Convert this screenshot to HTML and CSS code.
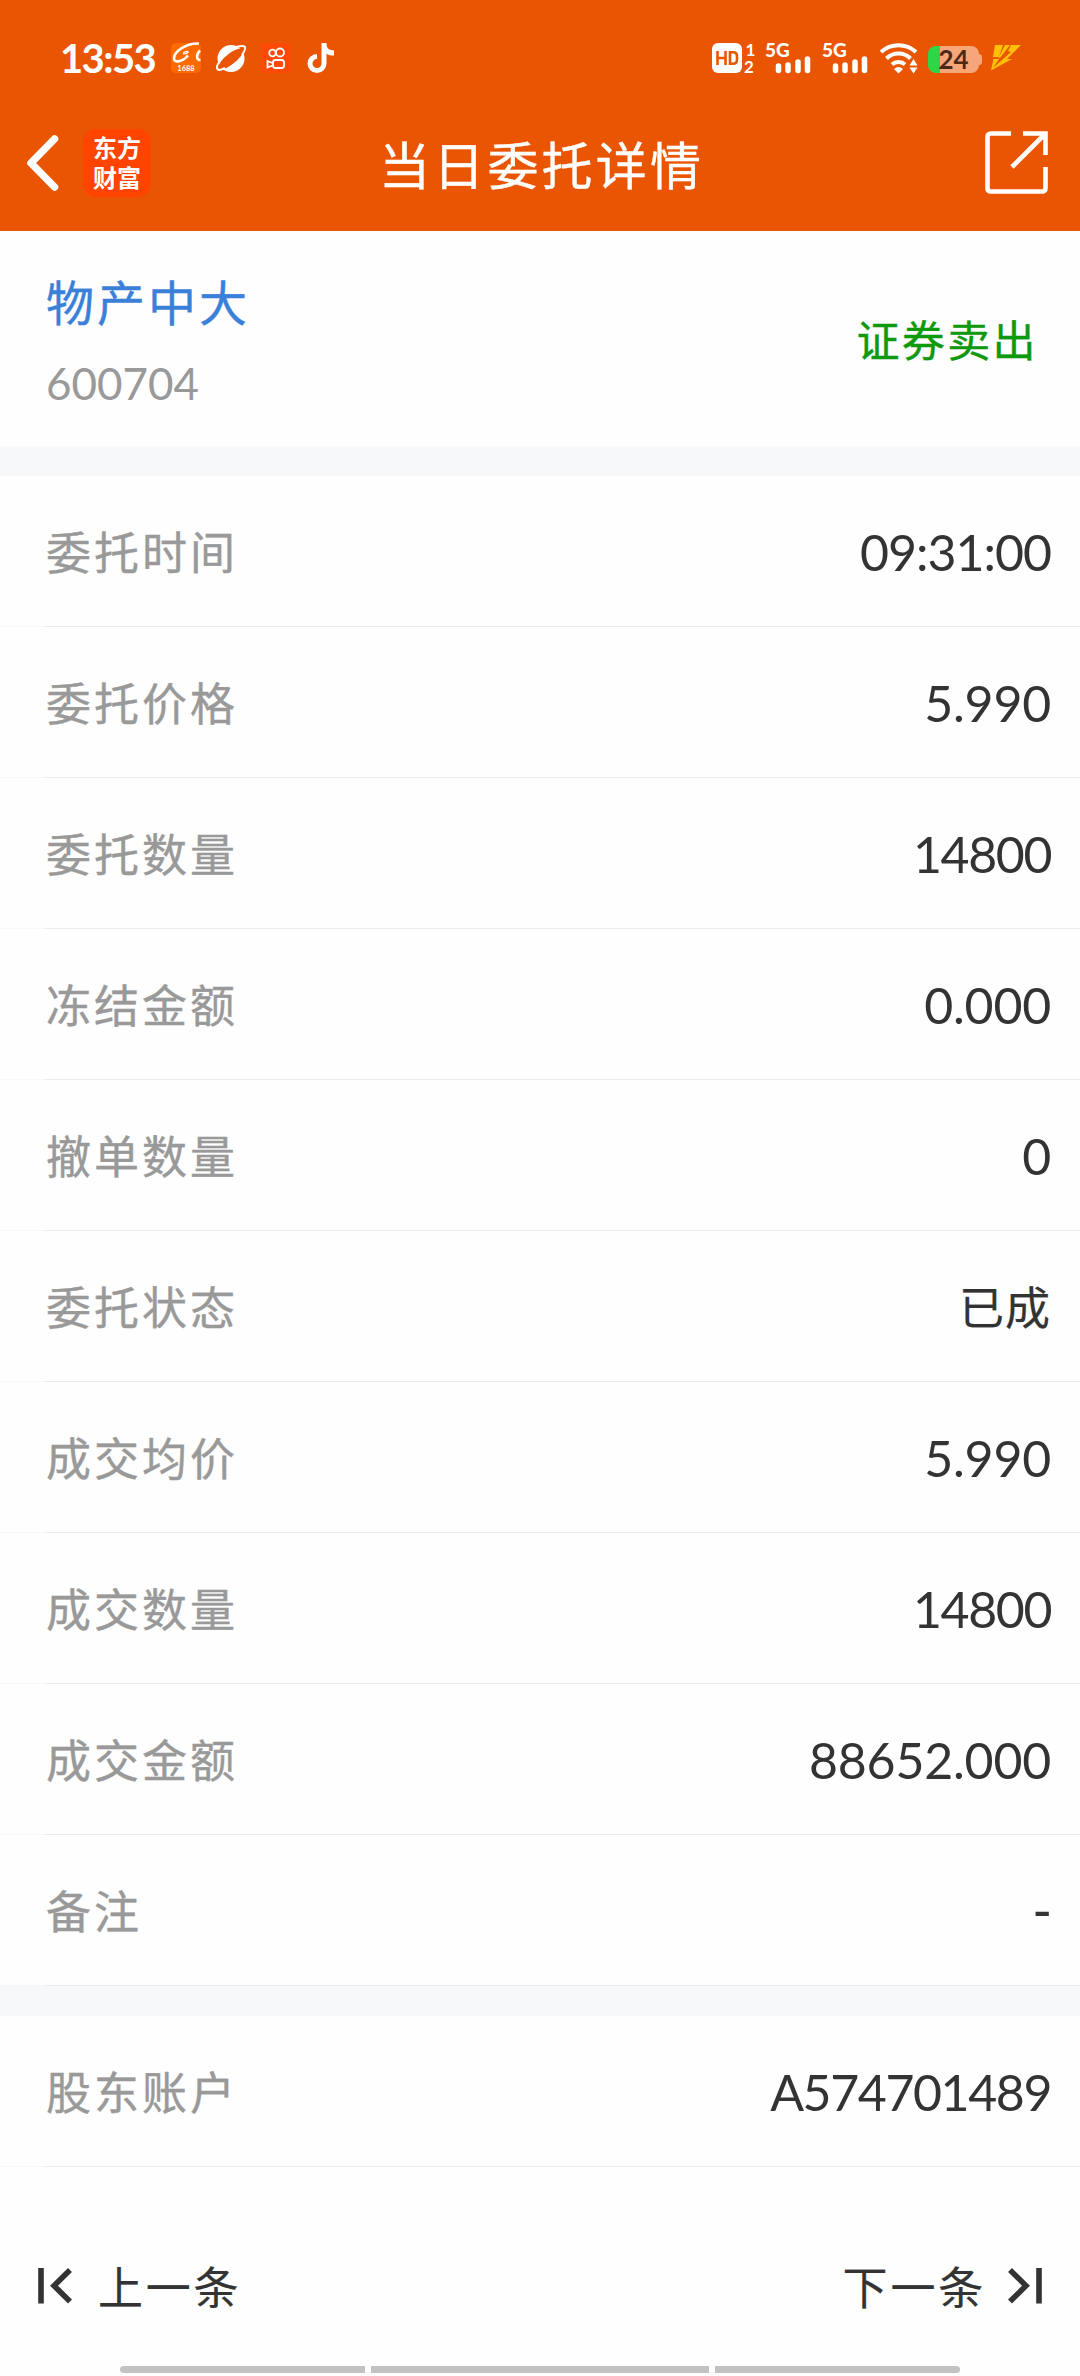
FILE: index.html
```html
<!DOCTYPE html>
<html lang="zh-CN">
<head>
    <meta charset="UTF-8">
    <meta name="viewport" content="width=device-width, initial-scale=1.0">
    <title>当日委托详情</title>
    <link rel="stylesheet" href="styles.css">
</head>
<body>
    <div class="status-bar">
        <span class="time">13:53</span>
        <div class="app-icons">
            <svg width="30" height="30" viewBox="0 0 30 30">
                <rect width="30" height="30" rx="5" fill="#ff6a00"/>
                <path d="M28 .5C14 0 3 9 3 15.500c0 5 9 3 14-3" fill="none" stroke="#fff" stroke-width="2.600"/>
                <path d="M12 10c3-2 6-2 5-.5-1 1-3 1.500-5 1.500" fill="none" stroke="#fff" stroke-width="1.200"/>
                <path d="M29 7.500c-4 4-4 10 .5 9.500" fill="none" stroke="#fff" stroke-width="2.600"/>
                <text x="15" y="27.500" text-anchor="middle" class="icon-1688">1688</text>
            </svg>
            <svg width="30" height="30" viewBox="0 0 30 30">
                <circle cx="15" cy="15.500" r="13.500" fill="#fff"/>
                <path d="M3 26C-2 21 20 2 27 6c5 4-18 24-24 20z" fill="#ea5504"/>
                <path d="M4 18c-4 5-4 8-1 9 2 0 4-1 6-2M20 4c4-1 8-2 9 0s-1 5-3 8" fill="none" stroke="#fff" stroke-width="2"/>
            </svg>
            <svg width="30" height="30" viewBox="0 0 30 30">
                <rect width="30" height="30" rx="5" fill="#ff4906"/>
                <g fill="none" stroke="#fff" stroke-width="1.800">
                    <circle cx="11.500" cy="10" r="3.300"/>
                    <circle cx="19" cy="9.500" r="4"/>
                    <rect x="12" y="17" width="11" height="8" rx="2.500"/>
                    <path d="M11.500 20l-5-2v6.500l5-2"/>
                </g>
            </svg>
            <svg width="30" height="30" viewBox="0 0 30 30">
                <path d="M18 0v20.500a7 7 0 1 1-7-7M18 1c0 6 4 9 10 9" fill="none" stroke="#fff" stroke-width="5"/>
            </svg>
        </div>
        <div class="system-icons">
            <svg width="44" height="32" viewBox="0 0 44 32">
                <rect y="1" width="30" height="30" rx="6" fill="#fff"/>
                <path d="M5.500 9v14M13.500 9v14M5.500 16h8M18 10.200h3q4 0 4 4v3.600q0 4-4 4h-3z" fill="none" stroke="#ea5504" stroke-width="2.600"/>
                <text x="33.500" y="13.500" class="sim">1</text>
                <text x="32" y="31" class="sim">2</text>
            </svg>
            <svg class="signal" width="48" height="32" viewBox="0 0 48 32">
                <text x="0" y="15" class="net">5G</text>
                <path d="M13.500 24v4.500M23 23v5.500M33 20v8.500M42.500 17v11.500" stroke="#fff" stroke-width="5.500" stroke-linecap="round"/>
            </svg>
            <svg class="signal" width="48" height="32" viewBox="0 0 48 32">
                <text x="0" y="15" class="net">5G</text>
                <path d="M13.500 24v4.500M23 23v5.500M33 20v8.500M42.500 17v11.500" stroke="#fff" stroke-width="5.500" stroke-linecap="round"/>
            </svg>
            <svg class="wifi" width="40" height="32" viewBox="0 0 40 32">
                <g fill="none" stroke="#fff" stroke-width="4">
                    <path d="M2 10a26 26 0 0 1 35 0"/>
                    <path d="M7.500 16.500a17 17 0 0 1 24 0"/>
                    <path d="M13 22.500a9.500 9.500 0 0 1 13 0"/>
                </g>
                <path d="M15 27q4.500-4 9 0l-4.500 4.500z" fill="#fff"/>
                <path d="M30.500 23.500l4-6.500 4 6.500zM30.500 25.500h8l-4 6z" fill="#fff"/>
            </svg>
            <div class="battery"><span>24</span></div>
            <svg class="bolt" width="32" height="26" viewBox="0 0 32 26">
                <path d="M5 0h8L9 12H3zM15 0h5L10 13H8.500zM21 0h10L17 14h5L1 25.500 3.500 14H9L3 23 21 7l-3-1z" fill="#ffc107"/>
            </svg>
        </div>
    </div>

    <div class="header">
        <svg class="back" width="34" height="56" viewBox="0 0 34 56">
            <path d="M28.500 4L5 28l23.500 24" fill="none" stroke="#fff" stroke-width="7.500" stroke-linecap="round" stroke-linejoin="round"/>
        </svg>
        <div class="logo"><span>东方</span><span>财富</span></div>
        <h1>当日委托详情</h1>
        <svg class="share" width="64" height="64" viewBox="0 0 64 64">
            <path d="M26 2.500H6Q2.500 2.500 2.500 6v51q0 3.500 3.500 3.500h51q3.500 0 3.500-3.500V36M38 2.500h22.500V24M60 3L27 36" fill="none" stroke="#fff" stroke-width="4.600"/>
        </svg>
    </div>

    <div class="stock">
        <div>
            <div class="stock-name">物产中大</div>
            <div class="stock-code">600704</div>
        </div>
        <div class="direction">证券卖出</div>
    </div>

    <div class="list">
        <div class="row"><span class="label">委托时间</span><span class="value time-value">09:31:00</span></div>
        <div class="row"><span class="label">委托价格</span><span class="value">5.990</span></div>
        <div class="row"><span class="label">委托数量</span><span class="value tight">14800</span></div>
        <div class="row"><span class="label">冻结金额</span><span class="value">0.000</span></div>
        <div class="row"><span class="label">撤单数量</span><span class="value">0</span></div>
        <div class="row"><span class="label">委托状态</span><span class="value text-value">已成</span></div>
        <div class="row"><span class="label">成交均价</span><span class="value">5.990</span></div>
        <div class="row"><span class="label">成交数量</span><span class="value tight">14800</span></div>
        <div class="row"><span class="label">成交金额</span><span class="value">88652.000</span></div>
        <div class="row"><span class="label">备注</span><span class="value empty">-</span></div>
    </div>

    <div class="list">
        <div class="row"><span class="label">股东账户</span><span class="value tight">A574701489</span></div>
    </div>

    <div class="pager">
        <div class="pager-btn">
            <svg width="36" height="36" viewBox="0 0 36 36">
                <path d="M3 0v35.500M32 2L16 17.700 32 33.500" fill="none" stroke="#333" stroke-width="5.600"/>
            </svg>
            <span>上一条</span>
        </div>
        <div class="pager-btn next">
            <span>下一条</span>
            <svg width="36" height="36" viewBox="0 0 36 36">
                <path d="M33 0v35.500M4 2l16 15.700L4 33.500" fill="none" stroke="#333" stroke-width="5.600"/>
            </svg>
        </div>
    </div>

    <div class="gesture-bar">
        <i></i><i class="middle"></i><i></i>
    </div>
</body>
</html>
```
FILE: styles.css
```css
* {
    box-sizing: border-box;
}
body {
    margin: 0;
    width: 1080px;
    height: 2376px;
    overflow: hidden;
    background-color: #fefefe;
    color: #333;
    font-family: Lato, "Noto Sans CJK SC", sans-serif;
}
svg {
    display: block;
    flex: none;
    overflow: visible;
}
.status-bar {
    display: flex;
    align-items: center;
    height: 95px;
    padding: 21px 58px 0 60px;
    background-color: #ea5504;
    color: #fff;
}
.time {
    width: 111px;
    font-size: 40px;
    font-weight: bold;
    letter-spacing: -1.6px;
    white-space: nowrap;
}
.app-icons {
    display: flex;
    gap: 15px;
}
.icon-1688 {
    fill: #fff;
    font-size: 7.500px;
    font-weight: bold;
}
.system-icons {
    display: flex;
    align-items: center;
    margin-left: auto;
}
.sim {
    fill: #fff;
    font-size: 17px;
    font-weight: bold;
}
.net {
    fill: #fff;
    font-size: 19px;
    font-weight: 900;
}
.signal {
    margin-left: 9px;
}
.wifi {
    margin-left: 9px;
}
.battery {
    display: flex;
    align-items: center;
    justify-content: center;
    position: relative;
    width: 51px;
    height: 27px;
    margin: 2px 4px 0 9px;
    border-radius: 8px;
    background: linear-gradient(to right, #2ed647 12px, #f7a67c 12px);
    color: #4b2a1c;
    font-size: 26px;
    font-weight: bold;
    line-height: 27px;
}
.battery::after {
    content: "";
    position: absolute;
    right: -3px;
    top: 8px;
    width: 3px;
    height: 11px;
    border-radius: 0 3px 3px 0;
    background-color: #f7a67c;
}
.bolt {
    margin-left: 7px;
}

.header {
    display: flex;
    align-items: center;
    height: 136px;
    padding: 0 31px 0 26px;
    background-color: #ea5504;
    color: #fff;
}
.logo {
    display: flex;
    flex-direction: column;
    justify-content: center;
    width: 68px;
    height: 68px;
    margin-left: 23px;
    padding-bottom: 2px;
    border-radius: 14px;
    background-color: #ff4400;
    font-family: "Noto Sans CJK SC", sans-serif;
    font-size: 24px;
    font-weight: bold;
    line-height: 30px;
    text-align: center;
}
.header h1 {
    flex: 1;
    margin: 5px 0 0;
    padding-left: 228px;
    font-size: 51px;
    font-weight: normal;
    line-height: 74px;
    letter-spacing: 3.2px;
    -webkit-text-stroke: 0.4px;
}

.stock {
    display: flex;
    justify-content: space-between;
    align-items: center;
    height: 215px;
    padding: 5px 42px 0 46px;
}
.stock-name {
    color: #3a80d8;
    font-size: 48px;
    line-height: 72px;
    letter-spacing: 3px;
    -webkit-text-stroke: 0.4px;
}
.stock-code {
    margin-top: 11px;
    color: #999;
    font-size: 44px;
    line-height: 66px;
}
.direction {
    margin-top: -6px;
    color: #0f990f;
    font-size: 43px;
    letter-spacing: 2.4px;
    -webkit-text-stroke: 0.4px;
}

.list {
    border-top: 30px solid #f6f8fa;
}
.row {
    display: flex;
    justify-content: space-between;
    align-items: center;
    height: 151px;
    padding: 0 29px 0 46px;
    background: linear-gradient(to right, #f8f8f8 45px, #ececec 45px) bottom / 100% 1px no-repeat;
}
.label {
    margin-top: -3px;
    color: #999;
    font-size: 45px;
    letter-spacing: 3px;
    -webkit-text-stroke: 0.4px;
}
.value {
    font-size: 50px;
    letter-spacing: -0.2px;
}
.text-value {
    margin-top: -3px;
    font-size: 45px;
    letter-spacing: 1px;
    -webkit-text-stroke: 0.2px;
}
.time-value {
    letter-spacing: -1px;
}
.tight {
    letter-spacing: -1.4px;
}
.empty {
    margin-top: -10px;
    font-family: "Noto Sans CJK SC", sans-serif;
    font-weight: 500;
}

.pager {
    display: flex;
    justify-content: space-between;
    align-items: center;
    height: 199px;
    padding: 38px 38px 0;
}
.pager-btn {
    display: flex;
    align-items: center;
    gap: 24px;
    font-size: 45px;
    letter-spacing: 2.8px;
    -webkit-text-stroke: 0.2px;
}
.next {
    gap: 20px;
}
.gesture-bar {
    display: flex;
    gap: 6px;
    padding: 0 120px;
}
.gesture-bar i {
    width: 245px;
    height: 7px;
    background-color: #c2c2c2;
}
.gesture-bar .middle {
    width: 338px;
}
.gesture-bar i:first-child {
    border-radius: 4px 0 0 4px;
}
.gesture-bar i:last-child {
    border-radius: 0 4px 4px 0;
}
```
